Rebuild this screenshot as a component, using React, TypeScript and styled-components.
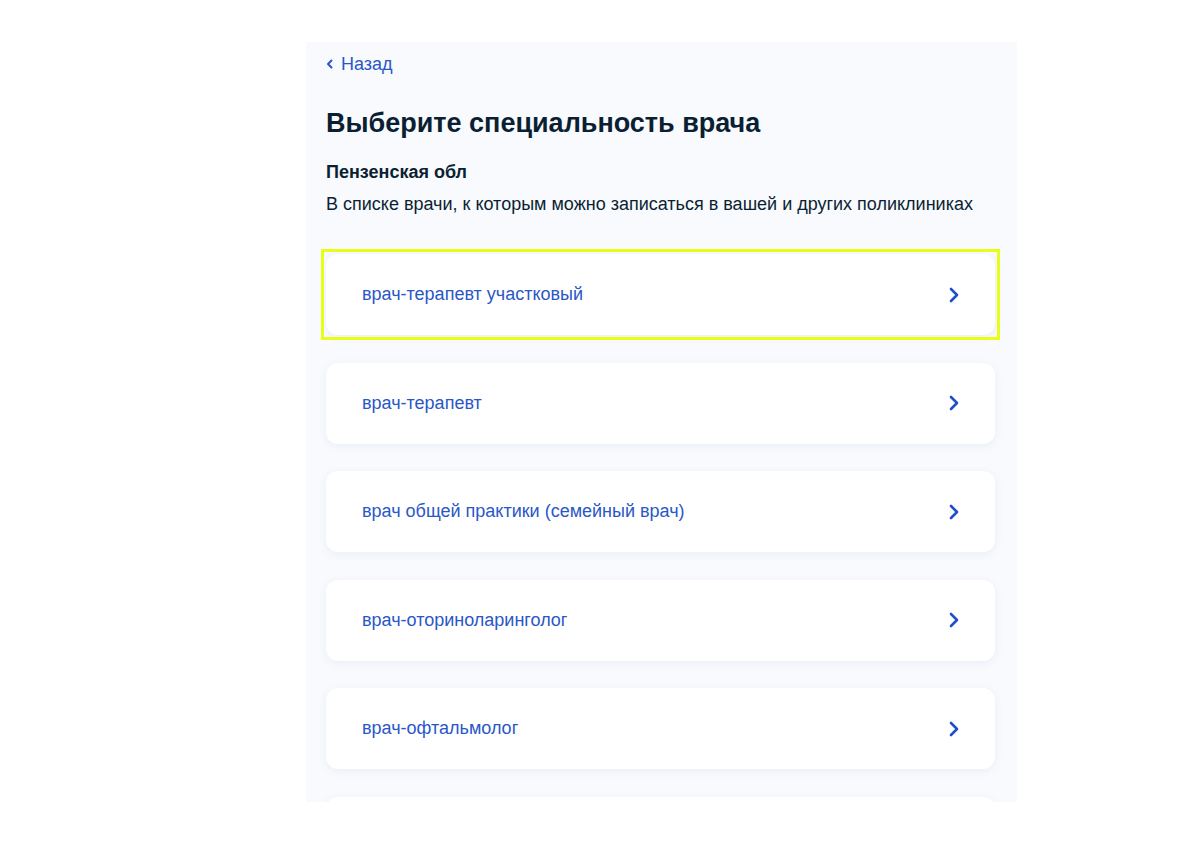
import React from "react";
import styled, { createGlobalStyle } from "styled-components";

const GlobalStyle = createGlobalStyle`
  body {
    margin: 0;
    background: #ffffff;
    font-family: "Liberation Sans", Arial, sans-serif;
  }
`;

const Page = styled.div`
  display: flex;
  padding: 42px 0 0 306px;
`;

const Panel = styled.div`
  display: flex;
  flex-direction: column;
  width: 711px;
  height: 760px;
  overflow: hidden;
  background: #f8fafd;
  padding: 0 20px;
  box-sizing: border-box;
`;

const BackLink = styled.a`
  display: flex;
  align-items: center;
  gap: 8px;
  margin-top: 12px;
  color: #2a57c8;
  font-size: 18px;
  line-height: 20px;
  text-decoration: none;
  cursor: pointer;
`;

const Title = styled.h1`
  margin: 33px 0 0;
  font-size: 27px;
  line-height: 32px;
  font-weight: 700;
  color: #0b1f33;
`;

const Region = styled.div`
  margin-top: 21px;
  font-size: 18px;
  line-height: 24px;
  font-weight: 700;
  color: #0b1f33;
`;

const Hint = styled.p`
  margin: 8px 0 0;
  font-size: 18px;
  line-height: 24px;
  color: #0b1f33;
`;

const List = styled.div`
  display: flex;
  flex-direction: column;
  gap: 27.5px;
  margin-top: 38px;
  width: 669px;
`;

const Card = styled.button<{ $focused?: boolean }>`
  position: relative;
  display: flex;
  align-items: center;
  justify-content: space-between;
  flex-shrink: 0;
  height: 81px;
  padding: 0 36px;
  border: none;
  border-radius: 12px;
  background: #ffffff;
  box-shadow: 0 2px 8px rgba(134, 151, 196, 0.12);
  font-family: inherit;
  font-size: 18px;
  color: #2a57c8;
  text-align: left;
  cursor: pointer;
  outline: none;

  &::after {
    content: "";
    display: ${(p) => (p.$focused ? "block" : "none")};
    position: absolute;
    inset: -5px;
    border: 3px solid #e6ff14;
    pointer-events: none;
  }
`;

const Chevron = () => (
  <svg width="10" height="16" viewBox="0 0 10 16" fill="none">
    <path d="M2 2l6 6-6 6" stroke="#1f4fc6" strokeWidth="2.6" strokeLinecap="round" strokeLinejoin="round" />
  </svg>
);

const BackChevron = () => (
  <svg width="7" height="10" viewBox="0 0 7 10" fill="none">
    <path d="M5.5 1.5L2 5l3.5 3.5" stroke="#2a57c8" strokeWidth="2" strokeLinecap="round" strokeLinejoin="round" />
  </svg>
);

const specialties = [
  "врач-терапевт участковый",
  "врач-терапевт",
  "врач общей практики (семейный врач)",
  "врач-оториноларинголог",
  "врач-офтальмолог",
];

export default function App() {
  return (
    <>
      <GlobalStyle />
      <Page>
        <Panel>
          <BackLink>
            <BackChevron />
            Назад
          </BackLink>
          <Title>Выберите специальность врача</Title>
          <Region>Пензенская обл</Region>
          <Hint>В списке врачи, к которым можно записаться в вашей и других поликлиниках</Hint>
          <List>
            {specialties.map((s, i) => (
              <Card key={s} $focused={i === 0}>
                <span>{s}</span>
                <Chevron />
              </Card>
            ))}
            <Card aria-hidden="true" />
          </List>
        </Panel>
      </Page>
    </>
  );
}
